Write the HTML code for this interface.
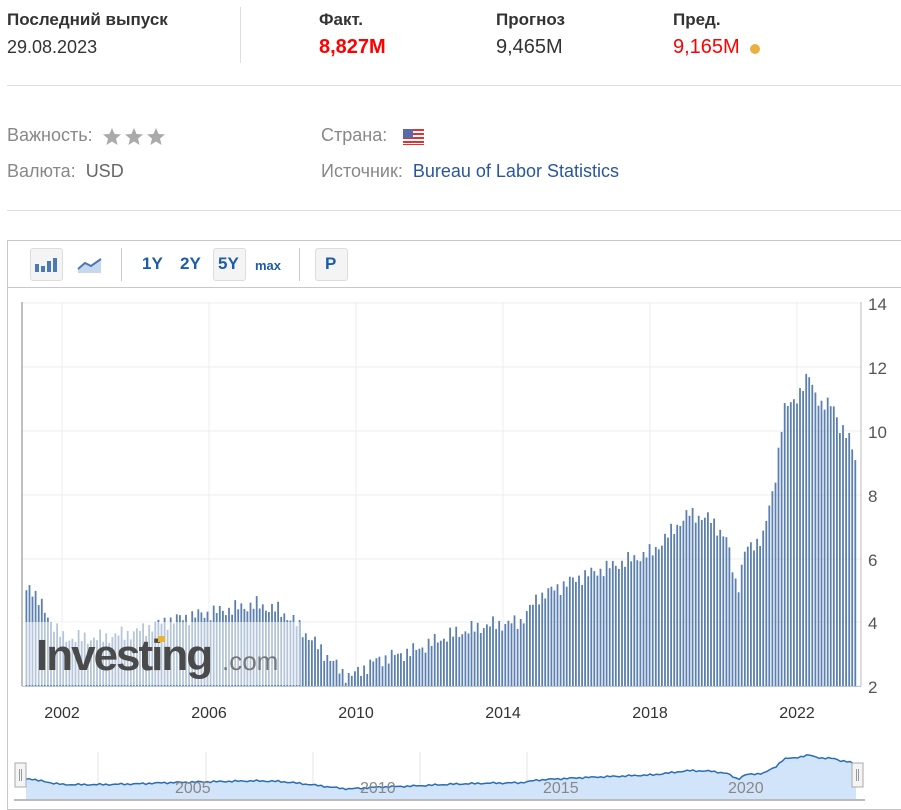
<!DOCTYPE html>
<html><head><meta charset="utf-8">
<style>
*{margin:0;padding:0;box-sizing:border-box}
body{width:901px;height:805px;background:#fff;font-family:"Liberation Sans",sans-serif;position:relative;overflow:hidden;color:#333}
.a{position:absolute;white-space:nowrap}
.b{font-weight:bold;font-size:17px;color:#333}
.v{font-size:20px}
.g{color:#888;font-size:18px}
.btn{position:absolute;top:248px;height:33px;border:1px solid #ddd;border-radius:3px;background:#f4f4f4}
.tb{position:absolute;top:254px;font-weight:bold;color:#1d5ca8;font-size:17px}
</style></head><body>
<div class="a b" style="left:7px;top:10px">Последний выпуск</div>
<div class="a" style="left:7px;top:37px;font-size:18px;color:#333">29.08.2023</div>
<div class="a" style="left:240px;top:7px;width:1px;height:56px;background:#ddd"></div>
<div class="a b" style="left:319px;top:10px">Факт.</div>
<div class="a v" style="left:319px;top:36px;color:#f00;font-weight:bold">8,827M</div>
<div class="a b" style="left:496px;top:10px">Прогноз</div>
<div class="a v" style="left:496px;top:36px;color:#333">9,465M</div>
<div class="a b" style="left:673px;top:10px">Пред.</div>
<div class="a v" style="left:673px;top:36px;color:#f00">9,165M</div>
<div class="a" style="left:750px;top:44px;width:10px;height:10px;border-radius:50%;background:#e8b140"></div>
<div class="a" style="left:7px;top:85px;width:894px;height:1px;background:#ddd"></div>

<div class="a g" style="left:7px;top:125px">Важность:</div>
<svg class="a" style="left:102px;top:127px" width="66" height="20" viewBox="0 0 66 20">
<g fill="#aaa"><path id="st" d="M10 1 L12.6 7 L19 7.4 L14 11.6 L15.6 18 L10 14.5 L4.4 18 L6 11.6 L1 7.4 L7.4 7Z"/>
<use href="#st" x="22"/><use href="#st" x="44"/></g></svg>
<div class="a g" style="left:7px;top:161px">Валюта:&nbsp; <span style="color:#666">USD</span></div>
<div class="a g" style="left:321px;top:125px">Страна:</div>
<svg class="a" style="left:403px;top:129px" width="21" height="16" viewBox="0 0 21 16">
<rect width="21" height="16" fill="#fff"/>
<g fill="#d33"><rect y="0" width="21" height="2"/><rect y="4" width="21" height="2"/><rect y="8" width="21" height="2"/><rect y="12" width="21" height="2"/><rect y="15" width="21" height="1"/></g>
<rect width="10" height="9" fill="#5a6aa8"/></svg>
<div class="a g" style="left:321px;top:161px">Источник:&nbsp; <span style="color:#2a56a0">Bureau of Labor Statistics</span></div>
<div class="a" style="left:7px;top:210px;width:894px;height:1px;background:#ddd"></div>

<div class="a" style="left:7px;top:240px;width:900px;height:570px;border:1px solid #c8c8c8"></div>
<div class="a" style="left:8px;top:287px;width:893px;height:1px;background:#c8c8c8"></div>
<div class="btn" style="left:30px;width:33px"></div>
<svg class="a" style="left:34px;top:255px" width="26" height="20"><g fill="#4a7ab5"><rect x="1" y="9" width="4" height="8"/><rect x="7" y="11" width="4" height="6"/><rect x="13" y="6" width="4" height="11"/><rect x="19" y="3" width="4" height="14"/></g></svg>
<svg class="a" style="left:77px;top:255px" width="26" height="20"><path d="M1 14 L8 8 L14 11 L24 4 L24 18 L1 18Z" fill="#c7d8ee"/><path d="M1 14 L8 8 L14 11 L24 4" stroke="#4a7ab5" stroke-width="2" fill="none"/></svg>
<div class="a" style="left:121px;top:248px;width:1px;height:33px;background:#ccc"></div>
<div class="tb" style="left:142px">1Y</div>
<div class="tb" style="left:180px">2Y</div>
<div class="btn" style="left:213px;width:33px"></div>
<div class="tb" style="left:218px">5Y</div>
<div class="tb" style="left:255px;font-size:13px;top:258px">max</div>
<div class="a" style="left:299px;top:248px;width:1px;height:33px;background:#ccc"></div>
<div class="btn" style="left:315px;width:33px"></div>
<div class="tb" style="left:325px">P</div>

<svg id="ch" class="a" style="left:0;top:0" width="901" height="805"></svg>
<script>
var s='';
var ys=[303,367,431,495,559,622,686],lab=[14,12,10,8,6,4,2];
for(var i=0;i<7;i++){s+='<line x1="22" x2="861" y1="'+ys[i]+'" y2="'+ys[i]+'" stroke="#ececec"/>';
s+='<text x="868" y="'+(ys[i]+7)+'" font-size="17" fill="#555" font-family="Liberation Sans">'+lab[i]+'</text>';}
var yrs=[2002,2006,2010,2014,2018,2022];
for(var i=0;i<6;i++){var x=62+147*i;s+='<line x1="'+x+'" x2="'+x+'" y1="302" y2="686" stroke="#ececec"/>';
s+='<text x="'+x+'" y="718" font-size="16" fill="#333" text-anchor="middle" font-family="Liberation Sans">'+yrs[i]+'</text>';}
var k=[[2001,5.0],[2001.1,5.2],[2001.3,4.7],[2001.8,3.8],[2002.0,3.5],[2003,3.5],[2004,3.7],[2004.7,4.0],[2005.5,4.2],[2006.5,4.4],[2007.2,4.55],[2007.8,4.4],[2008.2,4.1],[2008.7,3.5],[2009.2,2.9],[2009.6,2.4],[2009.8,2.3],[2010.5,2.8],[2011.5,3.1],[2012.5,3.6],[2013.5,3.9],[2014.4,4.0],[2014.9,4.8],[2016,5.4],[2017,5.8],[2018,6.2],[2018.8,7.2],[2019.0,7.4],[2019.6,7.2],[2020.0,6.6],[2020.3,5.0],[2020.5,6.2],[2021.0,6.7],[2021.3,8.3],[2021.55,10.6],[2022.0,11.2],[2022.25,11.7],[2022.6,10.7],[2022.9,10.9],[2023.1,10.0],[2023.3,9.8],[2023.45,9.5],[2023.55,8.8]];
function f(t){for(var i=0;i<k.length-1;i++){if(t<=k[i+1][0]){var a=k[i],b=k[i+1];return a[1]+(b[1]-a[1])*(t-a[0])/(b[0]-a[0]);}}return k[k.length-1][1];}
function Y(v){return 686-(v-2)*31.92;}
var nav='';
for(var m=0;m<271;m++){var t=2001+m/12;var v=f(t)+0.18*Math.sin(m*2.7)+0.1*Math.sin(m*5.3);
var x=25.5+m*3.07;var y=Y(v);
s+='<rect x="'+x.toFixed(1)+'" y="'+y.toFixed(1)+'" width="1.8" height="'+(686-y).toFixed(1)+'" fill="#5b80b0"/>';
var nx=26+m*(830/270),ny=790-(v-2)*3.6;nav+=(m?'L':'M')+nx.toFixed(1)+' '+ny.toFixed(1);}
s+='<rect x="24" y="622" width="276" height="63" fill="#fff" opacity="0.55"/>';
s+='<text x="36" y="670" font-size="44" font-weight="bold" fill="#4a4a4a" font-family="Liberation Sans" letter-spacing="-2">Investing</text>';
s+='<text x="222" y="670" font-size="26" fill="#777" font-family="Liberation Sans">.com</text>';
s+='<rect x="158" y="636" width="7" height="6" fill="#f0b030"/>';
s+='<line x1="22" x2="22" y1="302" y2="686" stroke="#aaa" stroke-width="1.5"/><line x1="861" x2="861" y1="302" y2="686" stroke="#bbb"/>';
s+='<line x1="22" x2="861" y1="686.5" y2="686.5" stroke="#b8c8dc"/>';
[98,206,313,420,527].forEach(function(x){s+='<line x1="'+x+'" x2="'+x+'" y1="752" y2="800" stroke="#e6e6e6"/>';});
s+='<path d="'+nav+' L856 800 L26 800Z" fill="#d1e4fa"/><path d="'+nav+'" stroke="#2a6db5" stroke-width="1.5" fill="none"/>';
s+='<line x1="14" x2="865" y1="800" y2="800" stroke="#bbb" stroke-width="2"/>';
var nl=[["2005",175],["2010",360],["2015",543],["2020",728]];
nl.forEach(function(a){s+='<text x="'+a[1]+'" y="793" font-size="16" fill="#888" font-family="Liberation Sans">'+a[0]+'</text>';});
[15,852].forEach(function(x){s+='<rect x="'+x+'" y="763" width="11" height="24" fill="#f4f4f4" stroke="#aaa"/><line x1="'+(x+4.5)+'" x2="'+(x+4.5)+'" y1="769" y2="781" stroke="#999"/><line x1="'+(x+6.5)+'" x2="'+(x+6.5)+'" y1="769" y2="781" stroke="#999"/>';});
document.getElementById('ch').innerHTML=s;
</script>
</body></html>
